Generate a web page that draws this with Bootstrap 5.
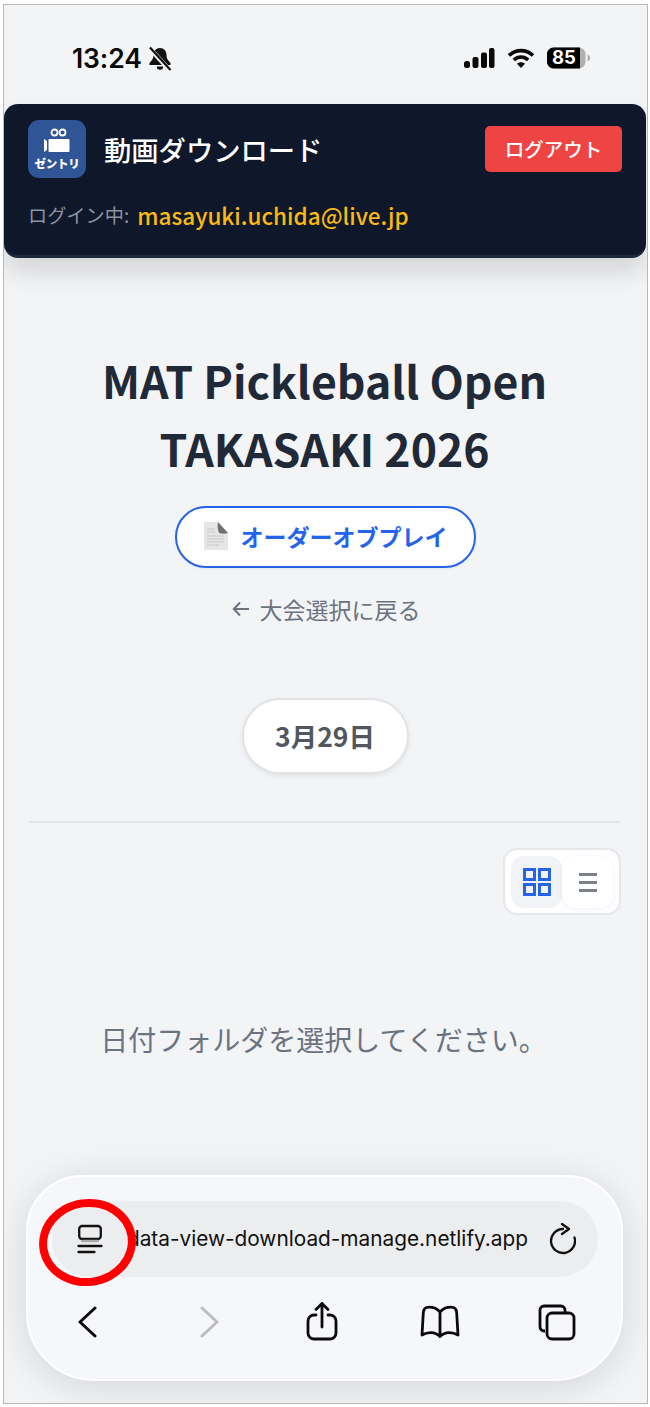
<!DOCTYPE html>
<html lang="ja">
<head>
<meta charset="utf-8">
<title>動画ダウンロード</title>
<link href="https://cdn.jsdelivr.net/npm/bootstrap@5.3.0/dist/css/bootstrap.min.css" rel="stylesheet">
<style>
html,body{margin:0;background:#fff;height:1407px;overflow:hidden}
body{font-family:"Noto Sans CJK JP","Noto Sans",sans-serif;color:#1f2937}
.phone{position:relative;margin:4px 0 0 3px;width:645px;height:1400px;background:#f3f4f6;border:1px solid #b9b9b9;overflow:hidden}
.status{height:99px;padding:34px 56px 0 68px}
.clock{font-family:Inter,"Liberation Sans",sans-serif;font-weight:600;font-size:26.500px;line-height:38px;color:#0a0a0a;letter-spacing:-.1px;gap:6px}
.bar-top{height:154px;background:#0f172a;border-radius:14px;border-bottom:3px solid #1e293b;width:642px;padding:16px 24px 0 24px;box-shadow:0 14px 26px rgba(0,0,0,.13)}
.applogo{width:58px;height:58px;border-radius:11px;background:#2f5596;color:#fff}
.applabel{font-size:11.500px;font-weight:900;line-height:14px;letter-spacing:-.2px;margin-top:1px}
.apptitle{font-size:27.300px;font-weight:500;line-height:38px;color:#fff;margin:0 0 0 2px}
.logout{background:#ef4444;color:#fff;border:0;border-radius:5px;font-size:19.500px;font-weight:500;width:137px;height:46px;padding:0}
.who{margin-top:19px;line-height:36px}
.who-label{color:#8b93a1;font-size:19.200px}
.who-mail{font-size:22.500px;font-weight:500;margin-left:8px;color:#fbb916}
.maintitle{font-size:44.600px;font-weight:700;line-height:68px;color:#1f2937;margin:88px 0 0 -2px;text-align:center}
.orderbtn{width:301px;height:62px;border:2px solid #2563eb;background:#fff;border-radius:31px;color:#2563eb;font-weight:700;font-size:23px;gap:12px;box-shadow:0 1px 3px rgba(0,0,0,.06);margin-top:24px;line-height:30px;padding-bottom:2px;margin-left:-1px}
.backlink{color:#6b7280;font-size:23px;line-height:32px;margin-top:25px;gap:10px;margin-left:1px}
.datepill{width:167px;height:76px;border-radius:38px;background:#fff;border:2px solid #e2e3e6;font-size:26.500px;font-weight:700;color:#52565e;box-shadow:0 2px 5px rgba(0,0,0,.08);margin-top:73px;margin-left:-1px}
.rule{height:2px;background:#e2e4e8;margin:47px 27px 0 25px}
.viewtoggle{width:118px;height:67px;background:#fff;border:2px solid #e5e7eb;border-radius:14px;padding:6px;margin:25px 26px 0 auto;box-sizing:border-box}
.vt-on,.vt-off{width:52px;height:52px;border-radius:13px}
.vt-on{background:#f1f3f6}
.vt-off{background:#fff;box-shadow:0 1px 4px rgba(37,99,235,.1)}
.hint{font-size:28px;line-height:40px;color:#6b7280;text-align:center;margin:104px 0 0 -4px}
.safari{position:absolute;left:22px;top:1170px;width:597px;height:206px;background:#f6f7fb;border:2px solid #fff;border-radius:56px 56px 68px 68px;box-shadow:0 6px 40px rgba(0,0,0,.13);padding:24px 23px 0 24px}
.urlfield{height:76px;border-radius:38px;background:#ecedef;padding:0 22px 0 0}
.urltext{font-family:Inter,"Liberation Sans",sans-serif;font-size:20.800px;color:#111;white-space:nowrap;flex:1;text-align:right;margin-right:20px;overflow:hidden}
.tabicon{position:absolute;left:49px;top:47px}
.tool{position:absolute}
.marker{position:absolute;left:35px;top:1194px;width:97px;height:87px;border:8px solid #f00;border-radius:50%;transform:rotate(-8deg)}
</style>
</head>
<body>
<div class="phone">
  <div class="status d-flex justify-content-between align-items-start">
    <div class="clock d-flex align-items-center">13:24
      <svg width="24" height="25" viewBox="0 0 24 25"><path d="M12 2C8 2 5.500 5 5.500 9c0 4.500-2.500 6.200-4 8v2h21v-2c-1.500-1.800-4-3.500-4-8C18.500 5 16 2 12 2zM8.800 20.500a3.200 3.200 0 0 0 6.400 0z" fill="#111"/><path d="M1.500 2l20 22" stroke="#f3f4f6" stroke-width="4.500"/><path d="M2 1.500l20.500 22.500" stroke="#111" stroke-width="2.200"/></svg>
    </div>
    <div class="d-flex align-items-center gap-2 mt-2">
      <svg width="32" height="22" viewBox="0 0 32 22" fill="#0a0a0a"><rect x="1" y="14" width="6" height="7" rx="2.500"/><rect x="9.500" y="10" width="6" height="11" rx="2"/><rect x="18" y="5.500" width="6" height="15.500" rx="2"/><rect x="26" y="1" width="5.500" height="20" rx="2"/></svg>
      <svg width="28" height="22" viewBox="0 0 28 22" class="ms-1" fill="none" stroke="#0a0a0a" stroke-width="3.600"><path d="M2 8.500c7-6.500 17-6.500 24 0"/><path d="M6.800 13c4.300-4 10.100-4 14.400 0"/><path d="M14 21l-4-4.200c2.200-2 5.800-2 8 0z" fill="#0a0a0a" stroke="none"/></svg>
      <svg width="44" height="22" viewBox="0 0 44 22" class="ms-1"><rect x="0" y="0.500" width="38.500" height="21" rx="6.500" fill="#b0b0b0"/><path d="M6.500.5H33v21H6.500A6.500 6.500 0 0 1 0 15V7A6.500 6.500 0 0 1 6.500.5z" fill="#000"/><path d="M40.500 7.500c1.800.6 2.800 2 2.800 3.500s-1 2.900-2.800 3.500z" fill="#b0b0b0"/><text x="17" y="17" text-anchor="middle" font-family="Inter,Liberation Sans,sans-serif" font-size="18.500" font-weight="700" fill="#fff">85</text></svg>
    </div>
  </div>

  <header class="bar-top">
    <div class="d-flex align-items-center justify-content-between">
      <div class="d-flex align-items-center gap-3">
        <div class="applogo d-flex flex-column align-items-center justify-content-center">
          <svg width="26" height="27" viewBox="0 0 26 27" fill="#fff"><circle cx="10.500" cy="4.500" r="3" fill="none" stroke="#fff" stroke-width="1.800"/><circle cx="18.500" cy="4.500" r="3" fill="none" stroke="#fff" stroke-width="1.800"/><rect x="4.500" y="11" width="21" height="13" rx="1"/><path d="M0 11l3 2v9l-3 2z"/></svg>
          <div class="applabel">ゼントリ</div>
        </div>
        <h1 class="apptitle">動画ダウンロード</h1>
      </div>
      <button class="btn logout" type="button">ログアウト</button>
    </div>
    <div class="who d-flex align-items-center"><span class="who-label">ログイン中:</span><span class="who-mail">masayuki.uchida@live.jp</span></div>
  </header>

  <h2 class="maintitle">MAT Pickleball Open<br>TAKASAKI 2026</h2>
  <div class="d-flex justify-content-center">
    <a class="orderbtn d-flex align-items-center justify-content-center text-decoration-none" href="#">
      <svg width="26" height="30" viewBox="0 0 26 30"><path d="M1 1h14l10 11v17H1z" fill="#e6e6e6"/><path d="M15 1c-1 5 0 8 1 11 3 1 6 1 9 0z" fill="#707070"/><path d="M4 8h8M4 11h8M4 15h17M4 18h17M4 21h17M4 24h12" stroke="#c8c8c8" stroke-width="1"/></svg>
      <span>オーダーオブプレイ</span>
    </a>
  </div>
  <div class="d-flex justify-content-center">
    <a class="backlink d-flex align-items-center text-decoration-none" href="#">
      <svg width="18" height="16" viewBox="0 0 18 16" fill="none" stroke="#6b7280" stroke-width="2"><path d="M17 8H2M8 1.500L1.800 8 8 14.500"/></svg>
      <span>大会選択に戻る</span>
    </a>
  </div>
  <div class="d-flex justify-content-center">
    <div class="datepill d-flex align-items-center justify-content-center">3月29日</div>
  </div>
  <div class="rule"></div>
  <div class="viewtoggle d-flex gap-0">
    <div class="vt-on d-flex align-items-center justify-content-center">
      <svg width="28" height="28" viewBox="0 0 28 28" fill="none" stroke="#2563eb" stroke-width="3"><rect x="1.500" y="1.500" width="10" height="10"/><rect x="16.500" y="1.500" width="10" height="10"/><rect x="1.500" y="16.500" width="10" height="10"/><rect x="16.500" y="16.500" width="10" height="10"/></svg>
    </div>
    <div class="vt-off d-flex align-items-center justify-content-center">
      <svg width="18" height="20" viewBox="0 0 18 20" fill="#7a808c"><rect y="1" width="18" height="3"/><rect y="9" width="18" height="3"/><rect y="17" width="18" height="3"/></svg>
    </div>
  </div>
  <p class="hint">日付フォルダを選択してください。</p>

  <div class="safari">
    <div class="urlfield d-flex align-items-center">
      <span class="urltext">data-view-download-manage.netlify.app</span>
      <svg width="28" height="32" viewBox="0 0 28 32" fill="none" stroke="#111" stroke-width="2.300" stroke-linecap="round" stroke-linejoin="round"><path d="M15 6A12 12 0 1 0 26.500 14.500"/><path d="M14 1l7 5-7 5"/></svg>
    </div>
    <svg class="tabicon" width="26" height="30" viewBox="0 0 26 30" fill="none" stroke="#111" stroke-width="2.300" stroke-linecap="round"><rect x="2.200" y="2" width="21.600" height="13" rx="3"/><path d="M1.500 22h23M1.500 28h16"/><path d="M5 17h16" stroke="#aaa"/></svg>
    <svg class="tool" style="left:49px;top:129px" width="22" height="32" viewBox="0 0 22 32" fill="none" stroke="#0a0a0a" stroke-width="3" stroke-linecap="round" stroke-linejoin="round"><path d="M18 2L3 16l15 14"/></svg>
    <svg class="tool" style="left:170px;top:129px" width="22" height="32" viewBox="0 0 22 32" fill="none" stroke="#bdbdbf" stroke-width="3" stroke-linecap="round" stroke-linejoin="round"><path d="M4 2l15 14L4 30"/></svg>
    <svg class="tool" style="left:278px;top:124px" width="32" height="40" viewBox="0 0 32 40" fill="none" stroke="#0a0a0a" stroke-width="2.800" stroke-linecap="round" stroke-linejoin="round"><path d="M10 14H8a6 6 0 0 0-6 6v12a6 6 0 0 0 6 6h16a6 6 0 0 0 6-6V20a6 6 0 0 0-6-6h-2"/><path d="M16 26V2.500M10 8.500L16 2.500l6 6"/></svg>
    <svg class="tool" style="left:392px;top:128px" width="40" height="34" viewBox="0 0 40 34" fill="none" stroke="#0a0a0a" stroke-width="2.800" stroke-linecap="round" stroke-linejoin="round"><path d="M20 7C17 3.500 13 2.200 9 2.200 5 2.200 3.500 4 3.300 8L2 30C7 27 15 26 20 31.500 25 26 33 27 38 30L36.700 8C36.500 4 35 2.200 31 2.200 27 2.200 23 3.500 20 7zM20 7v24.500"/></svg>
    <svg class="tool" style="left:510px;top:127px" width="38" height="38" viewBox="0 0 38 38" fill="none" stroke="#0a0a0a" stroke-width="2.800" stroke-linejoin="round"><path d="M7 27H6a4 4 0 0 1-4-4V6a4 4 0 0 1 4-4h17a4 4 0 0 1 4 4v2"/><rect x="9" y="9" width="27" height="26" rx="5"/></svg>
  </div>
  <div class="marker"></div>
</div>
<script src="https://cdn.jsdelivr.net/npm/bootstrap@5.3.0/dist/js/bootstrap.bundle.min.js"></script>
</body>
</html>
